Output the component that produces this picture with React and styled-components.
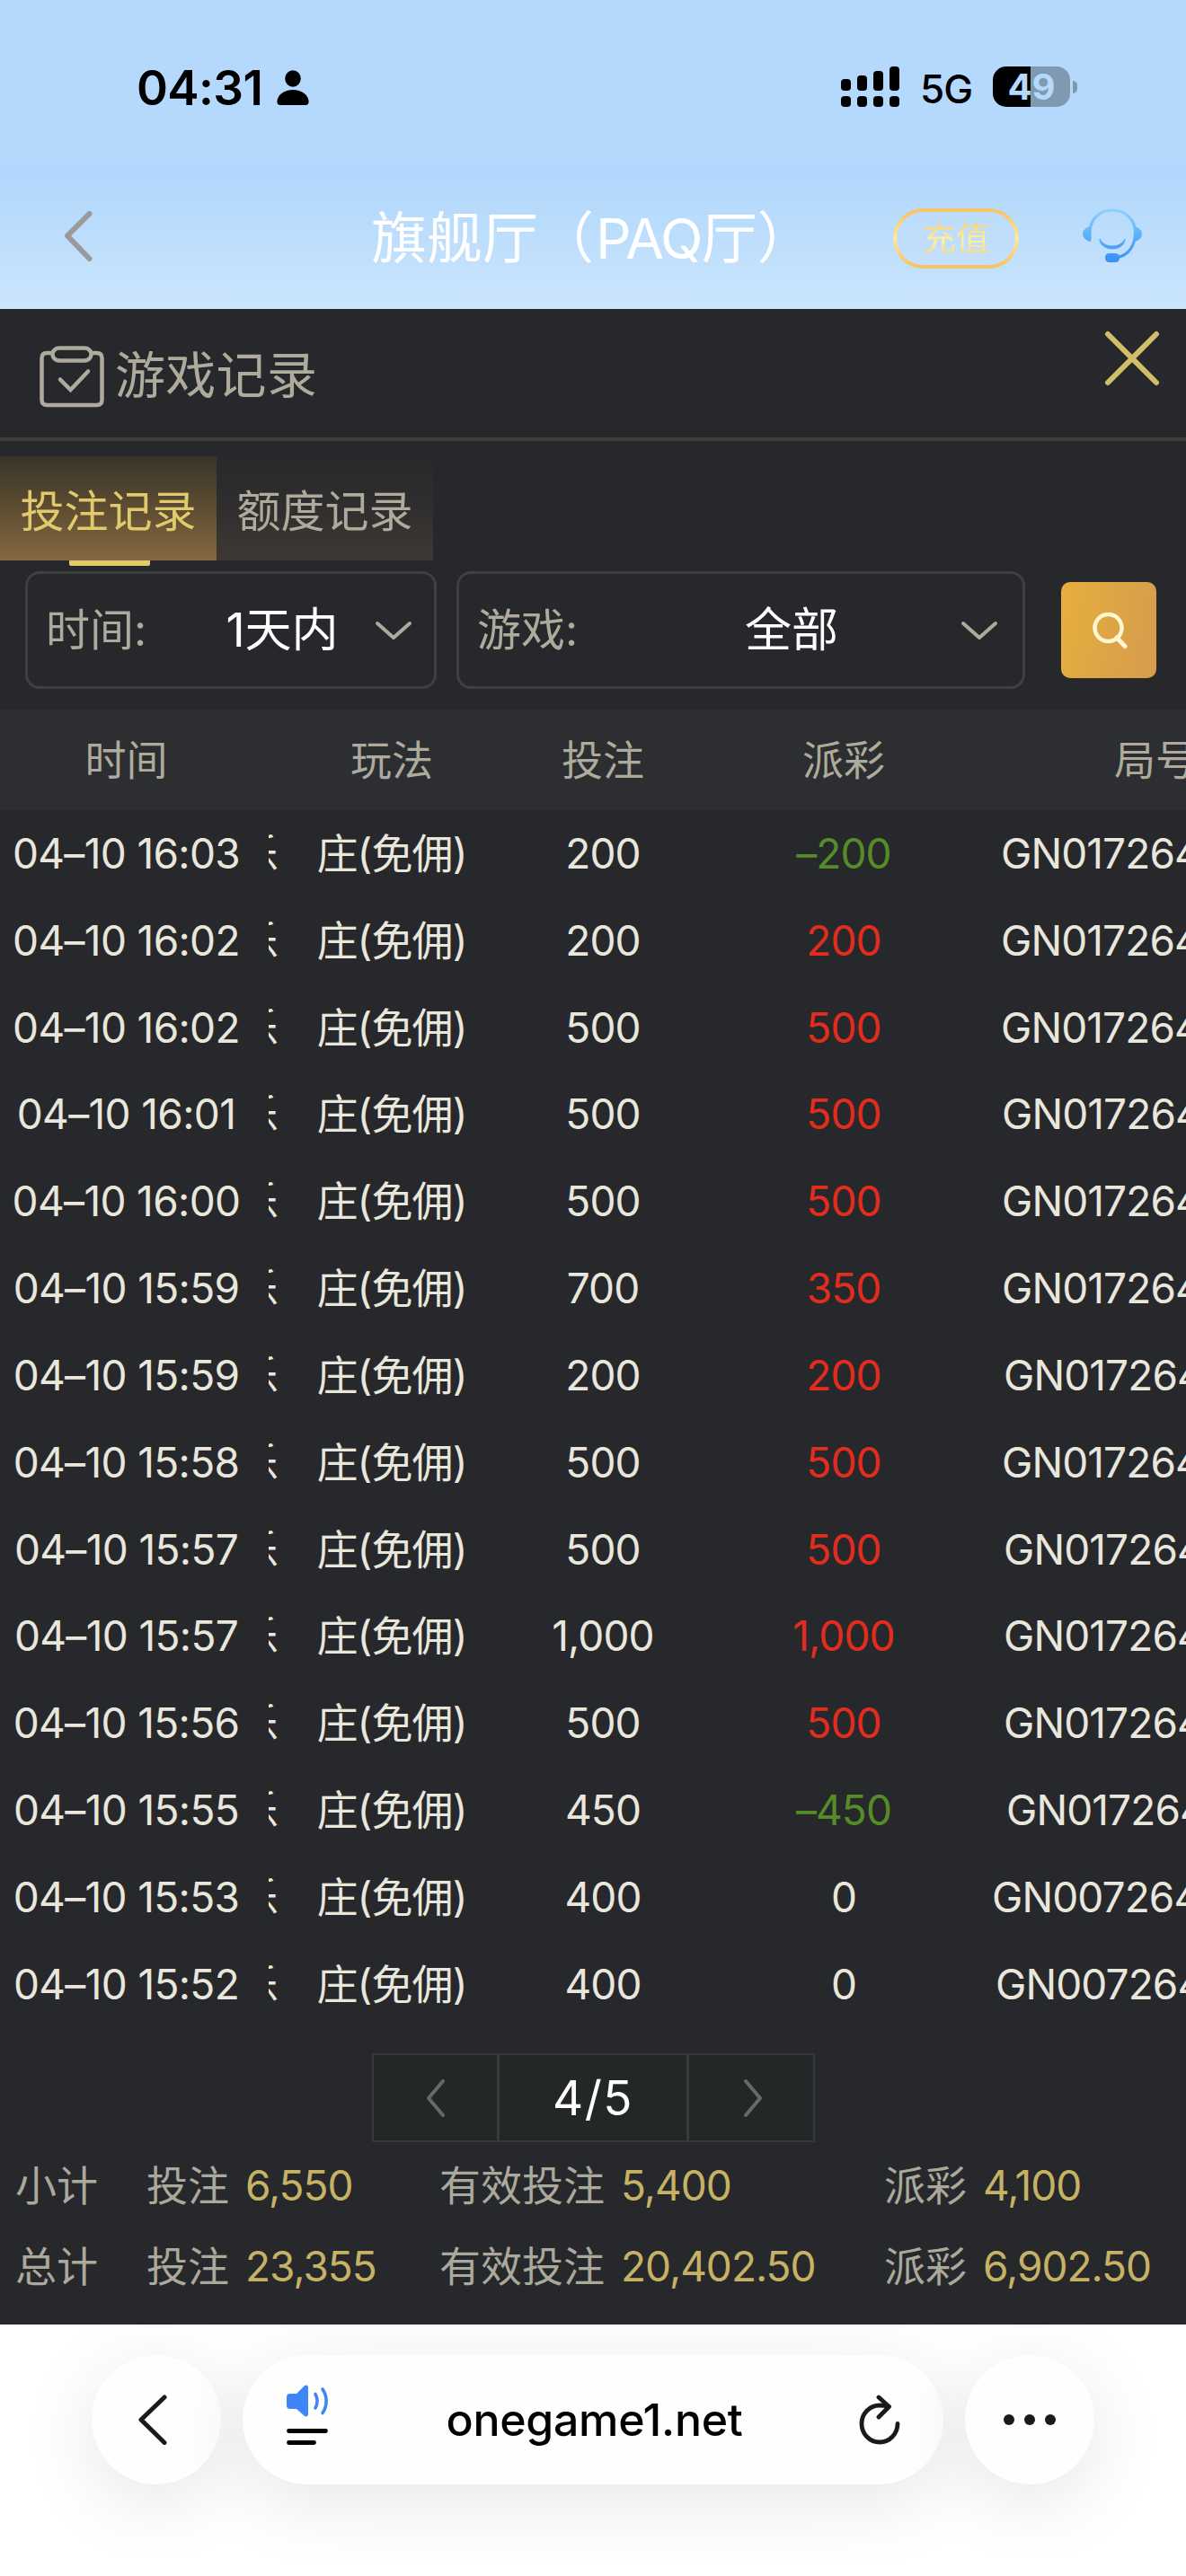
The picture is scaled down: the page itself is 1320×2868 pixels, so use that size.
import React from 'react';
import styled, { createGlobalStyle } from 'styled-components';

const Global = createGlobalStyle`
  * { box-sizing: border-box; }
  html, body { margin: 0; padding: 0; background: #fff; }
  body {
    font-family: Inter, "Noto Sans CJK SC", sans-serif;
    font-weight: 400;
    -webkit-font-smoothing: antialiased;
  }
  svg { display: block; flex: none; }
`;

const Screen = styled.div`
  width: 1320px;
  height: 2868px;
  display: flex;
  flex-direction: column;
  overflow: hidden;
  background: #fefefe;
`;

/* ---------- status bar ---------- */
const StatusBar = styled.div`
  height: 187px;
  flex: none;
  display: flex;
  justify-content: space-between;
  align-items: flex-start;
  padding: 74px 121px 0 152px;
  background: #b4d9fc;
`;
const Clock = styled.div`
  display: flex;
  align-items: center;
  gap: 16px;
  height: 47px;
  font-size: 53px;
  font-weight: 600;
  letter-spacing: -0.6px;
  color: #000;
`;
const StatusRight = styled.div`
  display: flex;
  align-items: center;
  height: 45px;
`;
const Network = styled.span`
  margin: 6px 23px 0 22px;
  width: 58px;
  font-size: 44px;
  font-weight: 500;
  line-height: 45px;
  letter-spacing: -1px;
`;
const Battery = styled.div`
  width: 86px;
  height: 45px;
  border-radius: 15px;
  background: linear-gradient(90deg, #000 42px, #7f99b1 42px);
  color: #b4d9fc;
  font-size: 40px;
  font-weight: 700;
  line-height: 45px;
  text-align: center;
`;
const BatteryNub = styled.div`
  width: 5px;
  height: 14px;
  margin-left: 3px;
  border-radius: 0 5px 5px 0;
  background: #7f99b1;
`;

/* ---------- page header ---------- */
const Header = styled.header`
  height: 157px;
  flex: none;
  display: grid;
  grid-template-columns: 413px 1fr 326px;
  background: linear-gradient(180deg, #b0d7fd 0, #b6dafc 24%, #cbe5fd 100%);
`;
const HeaderBack = styled.div`
  padding: 48px 0 0 71px;
`;
const HeaderTitle = styled.h1`
  margin: 0;
  padding-top: 3px;
  line-height: 152px;
  font-size: 62px;
  font-weight: 400;
  color: #fff;
  white-space: nowrap;
`;
const HallCode = styled.span`
  margin-left: 2px;
  letter-spacing: -1.8px;
`;
const HeaderActions = styled.div`
  display: flex;
  align-items: flex-start;
  padding-top: 45px;
`;
const Recharge = styled.div`
  width: 140px;
  height: 67px;
  padding: 4px;
  border-radius: 34px;
  background:
    linear-gradient(#bcdcfb, #c3e0fc) padding-box,
    linear-gradient(180deg, #f8c468 0, #f8c468 8%, #ffeb9b 50%, #f8c468 92%, #f8c468 100%) border-box;
  border: 4px solid transparent;
  display: flex;
  align-items: center;
  justify-content: center;
  margin-right: 71px;
`;
const RechargeText = styled.span`
  font-size: 37px;
  line-height: 50px;
  background: linear-gradient(180deg, #f6cf72 10%, #fff0a4 55%, #f6cf72 95%);
  -webkit-background-clip: text;
  background-clip: text;
  color: transparent;
`;

/* ---------- record panel ---------- */
const Panel = styled.main`
  height: 2244px;
  flex: none;
  display: flex;
  flex-direction: column;
  background: #27282c;
  overflow: hidden;
`;
const PanelHead = styled.div`
  height: 147px;
  flex: none;
  display: flex;
  align-items: flex-start;
  border-bottom: 4px solid #3f3f3c;
  padding: 40px 29px 0 43px;
`;
const PanelTitle = styled.h2`
  margin: 0 auto 0 12px;
  font-size: 56px;
  font-weight: 400;
  line-height: 68px;
  letter-spacing: 0.3px;
  color: #aeab9c;
`;
const CloseBox = styled.div`
  margin-top: -16px;
`;
const Tabs = styled.div`
  display: flex;
  height: 116px;
  flex: none;
  margin-top: 17px;
`;
const Tab = styled.div`
  position: relative;
  width: 241px;
  height: 116px;
  padding-top: 8px;
  text-align: center;
  font-size: 49px;
  line-height: 108px;
  white-space: nowrap;
  color: ${(p) => (p.$active ? '#e0ca6c' : '#aeab9c')};
  background: ${(p) =>
    p.$active
      ? 'linear-gradient(180deg, #383428 0, #5a4a31 45%, #83683f 100%)'
      : 'linear-gradient(180deg, #28292c 0, #2f2e2e 45%, #3d3833 100%)'};
  &::after {
    content: '';
    display: ${(p) => (p.$active ? 'block' : 'none')};
    position: absolute;
    left: 77px;
    top: 116px;
    width: 90px;
    height: 6px;
    border-radius: 0 0 2px 2px;
    background: #e0ca6c;
  }
`;
const Filters = styled.div`
  display: flex;
  align-items: center;
  height: 131px;
  flex: none;
  margin: 12px 33px 23px 28px;
`;
const Select = styled.div`
  width: ${(p) => p.$w}px;
  height: 131px;
  margin-right: ${(p) => p.$gap}px;
  padding: 0 ${(p) => p.$padRight}px 0 20px;
  display: flex;
  align-items: center;
  border: 3px solid #40403e;
  border-radius: 16px;
`;
const SelectLabel = styled.span`
  width: 114px;
  font-size: 49px;
  line-height: 60px;
  color: #aeab9c;
  white-space: nowrap;
`;
const SelectValue = styled.span`
  flex: 1;
  padding-left: ${(p) => p.$shift}px;
  font-size: 52px;
  line-height: 60px;
  text-align: center;
  color: #fff;
  white-space: nowrap;
`;
const SearchButton = styled.div`
  width: 106px;
  height: 107px;
  border-radius: 10px;
  display: flex;
  align-items: center;
  justify-content: center;
  padding-left: 3px;
  background: linear-gradient(100deg, #e8ae3e, #dda545 50%, #d69b4e);
`;

/* ---------- table ---------- */
const columns = '310px 252px 218px 318px 222px';
const TableHead = styled.div`
  display: grid;
  grid-template-columns: ${columns};
  height: 112px;
  flex: none;
  line-height: 112px;
  font-size: 46px;
  color: #aeab9c;
  background: #2d2e32;
  white-space: nowrap;
`;
const TableBody = styled.div`
  display: grid;
  grid-auto-rows: 96.82px;
  height: 1356px;
  flex: none;
`;
const Row = styled.div`
  display: grid;
  grid-template-columns: ${columns};
  line-height: 97px;
  font-size: 46px;
  letter-spacing: -0.9px;
  color: #e9e6dc;
  white-space: nowrap;
`;
const tones = { win: '#e12c1e', loss: '#568c27', flat: '#e9e6dc' };
const Cell = styled.div`
  text-align: center;
  color: ${(p) => (p.$tone ? tones[p.$tone] : 'inherit')};
`;
const HeadTime = styled.div`
  text-align: center;
  padding-right: 29px;
`;
const TimeCell = styled.div`
  display: flex;
  letter-spacing: -0.65px;
`;
const TimeText = styled.div`
  width: 281px;
  margin-right: 18px;
  text-align: center;
`;
const GameClip = styled.div`
  width: 11px;
  display: flex;
  justify-content: flex-end;
  overflow: hidden;
  letter-spacing: 0;
`;
const RoundCell = styled.div`
  padding-left: ${(p) => p.$pad}px;
  overflow: hidden;
`;

/* ---------- pager & totals ---------- */
const Pager = styled.div`
  display: grid;
  grid-template-columns: 140px 211px 141px;
  width: 493px;
  height: 99px;
  flex: none;
  margin: 28px 0 0 414px;
  border: 2px solid #383839;
  background: #232728;
`;
const PagerCell = styled.div`
  display: flex;
  align-items: center;
  justify-content: center;
  border-right: ${(p) => (p.$last ? '0' : '3px solid #3a3a3a')};
  font-size: 53px;
  letter-spacing: 1.5px;
  color: #fff;
`;
const Totals = styled.div`
  margin-top: 3px;
  display: flex;
  flex-direction: column;
`;
const TotalRow = styled.div`
  display: grid;
  grid-template-columns: 146px 326px 495px 320px;
  height: 90px;
  padding-left: 17px;
  line-height: 90px;
  font-size: 46px;
  color: #aba99b;
  white-space: nowrap;
`;
const Amount = styled.span`
  margin-left: 18px;
  letter-spacing: -1px;
  color: #c6b265;
`;

/* ---------- browser bar ---------- */
const BrowserBar = styled.footer`
  flex: 1;
  display: flex;
  gap: 24px;
  padding: 34px 102px 0;
  background: #fff;
  overflow: hidden;
`;
const Round = styled.div`
  width: 144px;
  height: 144px;
  padding-right: ${(p) => p.$nudge || 0}px;
  border-radius: 72px;
  display: flex;
  align-items: center;
  justify-content: center;
  background: #fefefd;
  box-shadow: 0 18px 84px rgba(0, 0, 0, 0.1);
`;
const Address = styled.div`
  width: 780px;
  height: 144px;
  padding: 0 48px;
  border-radius: 72px;
  display: flex;
  align-items: center;
  justify-content: space-between;
  background: #fefefd;
  box-shadow: 0 18px 84px rgba(0, 0, 0, 0.1);
`;
const ReaderBox = styled.div`
  padding-bottom: 8px;
`;
const Url = styled.span`
  font-size: 50px;
  font-weight: 500;
  letter-spacing: -0.3px;
  color: #000;
  margin-left: 1px;
`;

const Chevron = ({ w, h, d, color, width = 3 }) => (
  <svg width={w} height={h} viewBox={`0 0 ${w} ${h}`} fill="none">
    <path d={d} stroke={color} strokeWidth={width} strokeLinecap="round" strokeLinejoin="round" />
  </svg>
);

const PersonIcon = () => (
  <svg width="36" height="39" viewBox="0 0 36 39">
    <ellipse cx="18" cy="9.5" rx="8.8" ry="9.3" />
    <path d="M4 39C1.5 39 .4 37.500 .4 35 .8 27.500 8.500 22 18 22s17.200 5.500 17.600 13c0 2.500-1.100 4-3.600 4z" />
  </svg>
);

const SignalIcon = () => (
  <svg width="66" height="45" viewBox="0 0 66 45">
    {[14, 10, 5, 0].map((top, i) => (
      <React.Fragment key={top}>
        <rect x={i * 18} y={top} width="11" height={27 - top} rx="4" />
        <rect x={i * 18} y="33" width="11" height="12" rx="4" />
      </React.Fragment>
    ))}
  </svg>
);

const HeadsetIcon = () => (
  <svg width="66" height="60" viewBox="0 0 66 60" fill="none">
    <defs>
      <linearGradient id="hs" x1="0" y1="0" x2="0" y2="60" gradientUnits="userSpaceOnUse">
        <stop offset="0" stopColor="#93d0fb" />
        <stop offset=".45" stopColor="#62b4f9" />
        <stop offset="1" stopColor="#3a8df7" />
      </linearGradient>
    </defs>
    <path d="M8 34V27C8 12 19 2 33 2s25.500 10 25.500 25c0 14-7 25-20 27.500" stroke="url(#hs)" strokeWidth="3.200" />
    <path d="M9 20v17C3.500 36 0 32 0 28.500S3 21 9 20zM57 20v17c6-1 9-5 9-8.500S63 21 57 20z" fill="url(#hs)" />
    <path d="M19 34c3 5.500 8 8 14 8s11-2.500 14-8c.5 4-4 11-14 11S18.500 38 19 34z" fill="url(#hs)" stroke="url(#hs)" strokeWidth="1" strokeLinejoin="round" />
    <rect x="25" y="50" width="16" height="10" rx="4.500" fill="url(#hs)" />
  </svg>
);

const ClipboardIcon = () => (
  <svg width="73" height="70" viewBox="0 0 73 70" fill="none" stroke="#aeab9c" strokeWidth="4.500">
    <path d="M15 9H9C5 9 3.500 11 3.500 15v46c0 4 2 6 6 6h55c4 0 6-2 6-6V15c0-4-2-6-6-6h-7" />
    <rect x="15.500" y="3.500" width="43" height="14" rx="7" />
    <path d="M24 38.500l11.500 11.500 19.500-20.500" strokeLinecap="round" />
  </svg>
);

const SearchIcon = () => (
  <svg width="40" height="42" viewBox="0 0 40 42" fill="none" stroke="#fff7cf" strokeWidth="4.500">
    <circle cx="17.500" cy="18" r="15" />
    <path d="M27 29l9 9.500" strokeLinecap="round" strokeWidth="5" />
  </svg>
);

const ReaderIcon = () => (
  <svg width="48" height="70" viewBox="0 0 48 70" fill="none">
    <path d="M5 10h7l8.500-8.500C22.500-.3 25 .5 25 3v30c0 2.500-2.500 3.300-4.500 1.500L12 27H5c-3 0-4-1.500-4-4v-9c0-2.500 1-4 4-4z" fill="#3e86f8" />
    <path d="M33 10.500c2.700 5 2.700 10.500 0 15.500M41 5c5.500 8 5.500 18.500 0 26.500" stroke="#3e86f8" strokeWidth="3.600" strokeLinecap="round" />
    <path d="M3.500 51.500h41M3.500 64.500h28" stroke="#000" strokeWidth="4.800" strokeLinecap="round" />
  </svg>
);

const ReloadIcon = () => (
  <svg width="46" height="56" viewBox="0 0 46 56" fill="none" stroke="#1a1a1a" strokeWidth="4.800" strokeLinecap="round" strokeLinejoin="round">
    <path d="M43 32.500A20 20.500 0 1 1 23 12q5 0 10 1.500" />
    <path d="M22 3l11.500 10.500L22 25" />
  </svg>
);

const DotsIcon = () => (
  <svg width="60" height="12" viewBox="0 0 60 12" fill="#1a1a1a">
    {[7, 30, 53].map((x) => (
      <circle key={x} cx={x} cy="6" r="6" />
    ))}
  </svg>
);

const rows = [
  ['04–10 16:03', '200', '–200', 'loss', 'GN017264', 16],
  ['04–10 16:02', '200', '200', 'win', 'GN017264', 16],
  ['04–10 16:02', '500', '500', 'win', 'GN017264', 16],
  ['04–10 16:01', '500', '500', 'win', 'GN017264', 17],
  ['04–10 16:00', '500', '500', 'win', 'GN017264', 17],
  ['04–10 15:59', '700', '350', 'win', 'GN017264', 17],
  ['04–10 15:59', '200', '200', 'win', 'GN017264', 19],
  ['04–10 15:58', '500', '500', 'win', 'GN017264', 17],
  ['04–10 15:57', '500', '500', 'win', 'GN017264', 19],
  ['04–10 15:57', '1,000', '1,000', 'win', 'GN017264', 19],
  ['04–10 15:56', '500', '500', 'win', 'GN017264', 19],
  ['04–10 15:55', '450', '–450', 'loss', 'GN017264', 22],
  ['04–10 15:53', '400', '0', 'flat', 'GN007264', 6],
  ['04–10 15:52', '400', '0', 'flat', 'GN007264', 10],
];

const totals = [
  ['小计', '6,550', '5,400', '4,100'],
  ['总计', '23,355', '20,402.50', '6,902.50'],
];

export default function App() {
  return (
    <Screen>
      <Global />
      <StatusBar>
        <Clock>
          04:31
          <PersonIcon />
        </Clock>
        <StatusRight>
          <SignalIcon />
          <Network>5G</Network>
          <Battery>49</Battery>
          <BatteryNub />
        </StatusRight>
      </StatusBar>

      <Header>
        <HeaderBack>
          <Chevron w={34} h={56} d="M28.500 3L4 27.500 28.500 53" color="#999a9c" width={6} />
        </HeaderBack>
        <HeaderTitle>
          旗舰厅（<HallCode>PAQ</HallCode>厅）
        </HeaderTitle>
        <HeaderActions>
          <Recharge>
            <RechargeText>充值</RechargeText>
          </Recharge>
          <HeadsetIcon />
        </HeaderActions>
      </Header>

      <Panel>
        <PanelHead>
          <ClipboardIcon />
          <PanelTitle>游戏记录</PanelTitle>
          <CloseBox>
            <Chevron w={62} h={62} d="M4 4l54 54M58 4L4 58" color="#d2bd68" width={6} />
          </CloseBox>
        </PanelHead>

        <Tabs>
          <Tab $active>投注记录</Tab>
          <Tab>额度记录</Tab>
        </Tabs>

        <Filters>
          <Select $w={458} $gap={22} $padRight={24}>
            <SelectLabel>时间:</SelectLabel>
            <SelectValue $shift={46}>1天内</SelectValue>
            <Chevron w={42} h={22} d="M3 3l18 16L39 3" color="#aeab9c" width={4} />
          </Select>
          <Select $w={633} $gap={40} $padRight={27}>
            <SelectLabel>游戏:</SelectLabel>
            <SelectValue $shift={48}>全部</SelectValue>
            <Chevron w={42} h={22} d="M3 3l18 16L39 3" color="#aeab9c" width={4} />
          </Select>
          <SearchButton>
            <SearchIcon />
          </SearchButton>
        </Filters>

        <TableHead>
          <HeadTime>时间</HeadTime>
          <Cell>玩法</Cell>
          <Cell>投注</Cell>
          <Cell>派彩</Cell>
          <RoundCell $pad={142}>局号</RoundCell>
        </TableHead>
        <TableBody>
          {rows.map(([time, bet, payout, tone, round, pad]) => (
            <Row key={time + round + bet + payout + pad}>
              <TimeCell>
                <TimeText>{time}</TimeText>
                <GameClip>
                  <span>乐</span>
                </GameClip>
              </TimeCell>
              <Cell>庄(免佣)</Cell>
              <Cell>{bet}</Cell>
              <Cell $tone={tone}>{payout}</Cell>
              <RoundCell $pad={pad}>{round}</RoundCell>
            </Row>
          ))}
        </TableBody>

        <Pager>
          <PagerCell>
            <Chevron w={24} h={44} d="M20 3L4 22 20 41" color="#666869" width={4} />
          </PagerCell>
          <PagerCell>4/5</PagerCell>
          <PagerCell $last>
            <Chevron w={24} h={44} d="M4 3l16 19L4 41" color="#666869" width={4} />
          </PagerCell>
        </Pager>

        <Totals>
          {totals.map(([label, bet, valid, payout]) => (
            <TotalRow key={label}>
              <span>{label}</span>
              <span>
                投注<Amount>{bet}</Amount>
              </span>
              <span>
                有效投注<Amount>{valid}</Amount>
              </span>
              <span>
                派彩<Amount>{payout}</Amount>
              </span>
            </TotalRow>
          ))}
        </Totals>
      </Panel>

      <BrowserBar>
        <Round $nudge={9}>
          <Chevron w={36} h={56} d="M31 3L5 28l26 25.500" color="#1a1a1a" width={5} />
        </Round>
        <Address>
          <ReaderBox>
            <ReaderIcon />
          </ReaderBox>
          <Url>onegame1.net</Url>
          <ReloadIcon />
        </Address>
        <Round>
          <DotsIcon />
        </Round>
      </BrowserBar>
    </Screen>
  );
}
